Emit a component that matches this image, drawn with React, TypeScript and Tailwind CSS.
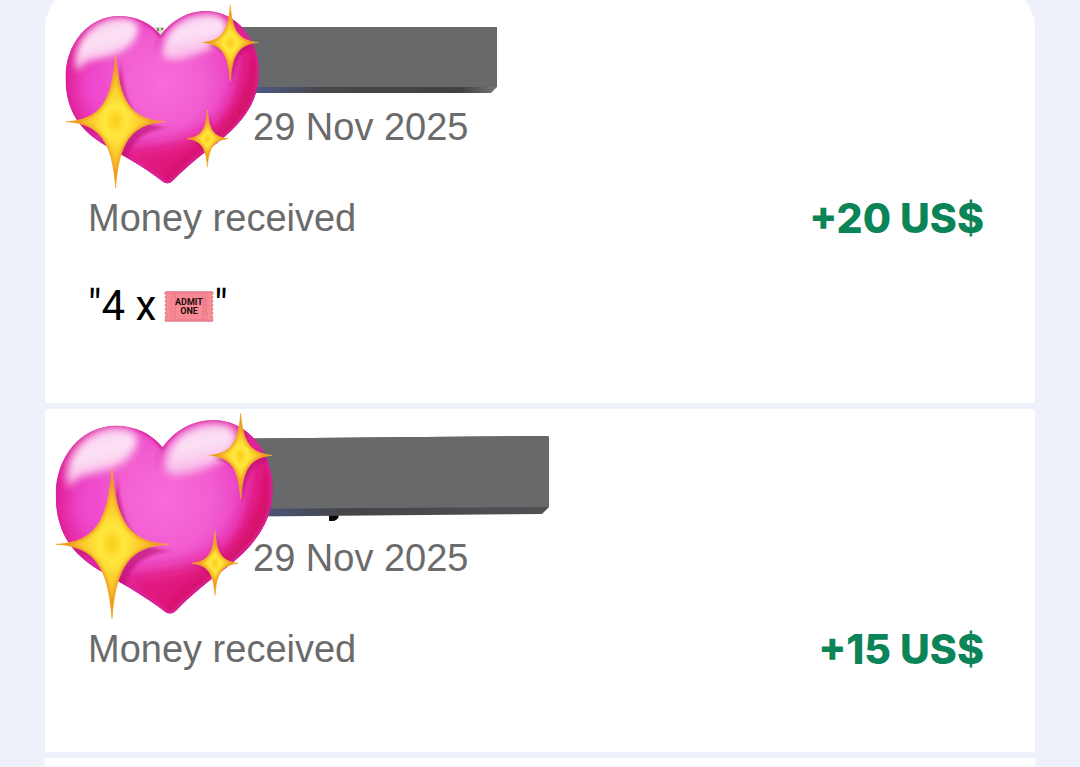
import React, { useId } from "react";

type SparkleProps = {
  cx: number;
  cy: number;
  rx: number;
  up: number;
  down: number;
};

// Four pointed star with curved sides, tips at rx / up / down from the centre
const sparklePath = ({ cx, cy, rx, up, down }: SparkleProps) => {
  const nearX = rx * 0.07;
  const farX = rx * 0.3;
  const nearUp = up * 0.31;
  const nearDown = down * 0.31;
  return [
    `M${cx} ${cy - up}`,
    `C${cx + nearX} ${cy - nearUp} ${cx + farX} ${cy - 6} ${cx + rx} ${cy}`,
    `C${cx + farX} ${cy + 6} ${cx + nearX} ${cy + nearDown} ${cx} ${cy + down}`,
    `C${cx - nearX} ${cy + nearDown} ${cx - farX} ${cy + 6} ${cx - rx} ${cy}`,
    `C${cx - farX} ${cy - 6} ${cx - nearX} ${cy - nearUp} ${cx} ${cy - up}Z`,
  ].join(" ");
};

const sparkles: SparkleProps[] = [
  { cx: 216, cy: 433, rx: 168, up: 226, down: 223 },
  { cx: 602, cy: 166, rx: 94, up: 126, down: 130 },
  { cx: 525, cy: 490, rx: 69, up: 96, down: 96 },
];

const heartPath =
  "M368 142C335 100 285 77 228 77C122 77 47 172 47 285C47 395 95 466 190 518C270 562 330 600 375 635Q392 648 408 632C450 588 500 548 560 502C650 432 698 360 698 268C698 150 620 60 520 60C455 60 400 95 368 142Z";

const SparklingHeart = ({ className }: { className: string }) => {
  const id = useId();

  return (
    <svg
      viewBox="42 33 660 630"
      preserveAspectRatio="none"
      className={className}
      role="img"
      aria-label="Sparkling heart"
    >
      <defs>
        <radialGradient id={`${id}fill`} gradientUnits="userSpaceOnUse" cx="370" cy="300" r="370">
          <stop offset="0" stopColor="#f96cd9" />
          <stop offset="0.4" stopColor="#f25dd0" />
          <stop offset="0.66" stopColor="#eb42c4" />
          <stop offset="0.86" stopColor="#e4229c" />
          <stop offset="1" stopColor="#d01a70" />
        </radialGradient>
        <linearGradient id={`${id}gloss`} x1="0" y1="0" x2="0.3" y2="1">
          <stop offset="0" stopColor="#f8c6ec" />
          <stop offset="0.5" stopColor="#fce4f5" />
          <stop offset="1" stopColor="#f9b0e6" />
        </linearGradient>
        <radialGradient id={`${id}gold`}>
          <stop offset="0" stopColor="#fdcb1c" />
          <stop offset="0.22" stopColor="#ffe83c" />
          <stop offset="0.45" stopColor="#fcd02f" />
          <stop offset="1" stopColor="#f3a526" />
        </radialGradient>
        <filter id={`${id}soft`} x="-30%" y="-30%" width="160%" height="160%">
          <feGaussianBlur stdDeviation="12" />
        </filter>
        <filter id={`${id}wide`} x="-50%" y="-50%" width="200%" height="200%">
          <feGaussianBlur stdDeviation="24" />
        </filter>
        <filter id={`${id}thin`} x="-20%" y="-20%" width="140%" height="140%">
          <feGaussianBlur stdDeviation="5" />
        </filter>
        <clipPath id={`${id}clip`}>
          <path d={heartPath} />
        </clipPath>
        {sparkles.map((s, i) => (
          <clipPath key={i} id={`${id}star${i}`}>
            <path d={sparklePath(s)} />
          </clipPath>
        ))}
      </defs>

      <g clipPath={`url(#${id}clip)`}>
        <path d={heartPath} fill={`url(#${id}fill)`} />
        {/* darker lower tip and right side */}
        <path
          d="M210 530C300 515 430 510 520 465C590 420 625 350 645 180L740 180L700 480L400 680Z"
          fill="#e01278"
          opacity="0.9"
          filter={`url(#${id}wide)`}
        />
        <path d="M690 150C700 330 630 430 390 620L400 680L740 660V150Z" fill="#c81156" opacity="0.65" filter={`url(#${id}wide)`} />
        <ellipse cx="150" cy="320" rx="45" ry="60" fill="#f24bd4" opacity="0.7" filter={`url(#${id}wide)`} />
        <path d={heartPath} fill="none" stroke="#d8249c" strokeWidth="14" filter={`url(#${id}thin)`} />
        <path d="M366 120Q374 165 352 190" fill="none" stroke="#c92aa6" strokeWidth="10" opacity="0.6" filter={`url(#${id}soft)`} />
        {/* gloss on both lobes */}
        <path
          d="M82 250C70 165 140 88 220 84C282 82 306 108 284 148C250 210 190 212 142 224C114 231 100 240 96 262Z"
          fill={`url(#${id}gloss)`}
          filter={`url(#${id}soft)`}
        />
        <path
          d="M376 196C386 118 446 72 528 70C586 72 604 102 582 146C552 190 499 204 447 220C400 232 372 222 376 196Z"
          fill={`url(#${id}gloss)`}
          filter={`url(#${id}soft)`}
        />
        {sparkles.map((s, i) => (
          <path
            key={i}
            d={sparklePath({ ...s, cx: s.cx + s.rx * 0.1, cy: s.cy + s.rx * 0.12 })}
            fill="#b80d69"
            opacity="0.6"
            filter={`url(#${id}thin)`}
          />
        ))}
      </g>

      {sparkles.map((s, i) => (
        <g key={i}>
          <path d={sparklePath(s)} fill={`url(#${id}gold)`} stroke="#f5ad33" strokeWidth="2" strokeLinejoin="round" />
          <path
            d={sparklePath(s)}
            fill="none"
            stroke="#ec931f"
            strokeWidth="10"
            clipPath={`url(#${id}star${i})`}
            filter={`url(#${id}thin)`}
            opacity="0.8"
          />
        </g>
      ))}
    </svg>
  );
};

const Ticket = () => (
  <svg viewBox="0 0 150 92" className="h-[31px] w-[50px]" role="img" aria-label="Admission ticket">
    <path
      d="M6 2H144Q148 2 147 8Q139 12 147 18Q139 24 147 30Q139 36 147 42Q139 48 147 54Q139 60 147 66Q139 72 147 78Q141 82 147 86Q148 90 144 90H6Q2 90 3 86Q9 82 3 78Q11 72 3 66Q11 60 3 54Q11 48 3 42Q11 36 3 30Q11 24 3 18Q11 12 3 8Q2 2 6 2Z"
      fill="#f78a95"
      stroke="#d9727e"
      strokeWidth="3"
    />
    <path d="M22 7H128V85H22Z" fill="none" stroke="#ea7984" strokeWidth="2" />
    <path d="M33 7V85M117 7V85" stroke="#e06b78" strokeWidth="2" />
    <path d="M124 18V74" stroke="#d3707b" strokeWidth="5" strokeDasharray="3 4" />
    <g fill="#1d0b0d" fontFamily="Roboto, sans-serif" fontWeight="700" fontSize="27" textAnchor="middle">
      <text x="75" y="43">ADMIT</text>
      <text x="75" y="68">ONE</text>
    </g>
  </svg>
);

const ShortBar = () => {
  const id = useId();
  return (
    <svg viewBox="-48 0 345 66" className="h-[66px] w-[345px]" aria-hidden="true">
      <defs>
        <linearGradient id={id}>
          <stop offset="0.18" stopColor="#4c5a85" />
          <stop offset="0.4" stopColor="#48484b" />
          <stop offset="0.88" stopColor="#414143" />
          <stop offset="1" stopColor="#77777a" />
        </linearGradient>
      </defs>
      <path d="M-46 0H-36V9H-42Z" fill="#d6dec6" />
      <path d="M-43 1H-41V4H-43ZM-39 1H-37V3H-39Z" fill="#7d8b66" />
      <path d="M0 0H296Q297 0 297 1V60L291 66H0Z" fill={`url(#${id})`} />
      <path d="M0 0H296Q297 0 297 1V60H0Z" fill="#68696b" />
    </svg>
  );
};

const LongBar = () => {
  const id = useId();
  return (
    <svg viewBox="0 0 349 86" className="h-[86px] w-[349px]" aria-hidden="true">
      <defs>
        <linearGradient id={id}>
          <stop offset="0.2" stopColor="#4a5475" />
          <stop offset="0.4" stopColor="#454549" />
          <stop offset="1" stopColor="#515154" />
        </linearGradient>
      </defs>
      <path d="M129 79H139Q138 85 132 85H129Z" fill="#050505" />
      <path d="M0 3L347 0Q349 0 349 2V71L342 78L0 81Z" fill={`url(#${id})`} />
      <path d="M0 3L347 0Q349 0 349 2V71L0 73Z" fill="#68696b" />
    </svg>
  );
};

type EntryProps = {
  heart: string;
  bar: React.ReactNode;
  barArea: string;
  date: string;
  amount: string;
  children?: React.ReactNode;
};

const Entry = ({ heart, bar, barArea, date, amount, children }: EntryProps) => (
  <li className="relative bg-white pt-[27px] pr-[51px] pl-[43px]">
    <div className={barArea}>{bar}</div>
    <p className="pl-[165px] text-[38px] leading-[48px] text-[#6b6b6b]">{date}</p>
    <div className="mt-[43px] flex items-center justify-between">
      <span className="text-[38px] leading-[48px] text-[#6b6b6b]">Money received</span>
      <span className="font-[Inter,sans-serif] text-[41px] leading-[48px] font-extrabold text-[#0b8457]">{amount}</span>
    </div>
    {children}
    <SparklingHeart className={`absolute ${heart}`} />
  </li>
);

export default function App() {
  return (
    <main className="flex min-h-screen flex-col overflow-hidden bg-[#eef1fa] px-[45px] font-['Liberation_Sans',sans-serif]">
      <ul className="-mt-4 flex flex-1 flex-col gap-[6px] overflow-hidden rounded-t-[44px] border-t-16 border-white">
        <Entry
          heart="left-[19px] top-[3px] h-[187px] w-[196px]"
          bar={<ShortBar />}
          barArea="h-[76px] pl-[64px]"
          date="29 Nov 2025"
          amount="+20 US$"
        >
          <p className="mt-[34px] mb-[67px] flex items-center font-[Roboto,sans-serif] text-[42px] leading-[60px] text-black">
            <span className="mr-2">"4 x</span>
            <Ticket />
            <span>"</span>
          </p>
        </Entry>
        <Entry
          heart="left-[9px] top-[2px] h-[210px] w-[220px]"
          bar={<LongBar />}
          barArea="h-[98px] pl-[112px]"
          date="29 Nov 2025"
          amount="+15 US$"
        >
          <div className="h-[79px]" />
        </Entry>
        <li className="flex-1 bg-white" />
      </ul>
    </main>
  );
}
